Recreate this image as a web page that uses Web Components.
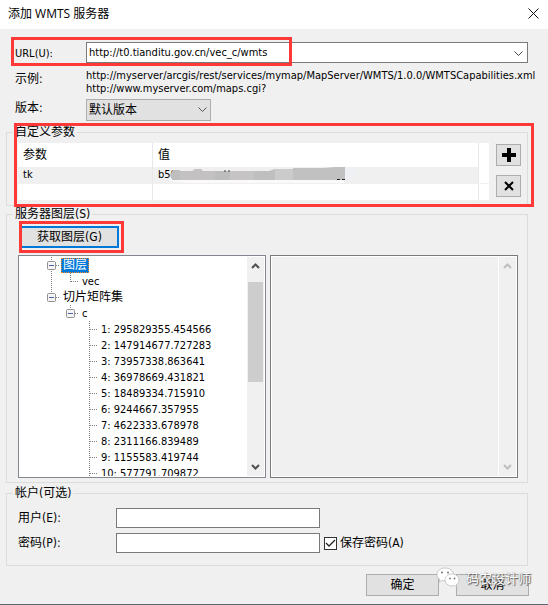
<!DOCTYPE html>
<html lang="zh-CN">
<head>
<meta charset="utf-8">
<title>添加 WMTS 服务器</title>
<style>
html {
    background: #f0f0f0;
}
body {
    margin: 0;
    color: #000;
    font: 12px/16px "DejaVu Sans Condensed", "Noto Sans CJK SC", sans-serif;
}
</style>
</head>
<body>
<wmts-dialog></wmts-dialog>

<template id="wmts-dialog">
    <style>
    :host {
        display: flex;
        flex-direction: column;
        box-sizing: border-box;
        min-height: 100vh;
        border-bottom: 1px solid #5d6572;
        background: #f0f0f0;
    }
    header {
        display: flex;
        align-items: center;
        justify-content: space-between;
        height: 29px;
        padding: 0 9px 2px 8px;
        box-sizing: border-box;
        background: #fff;
    }
    h1 {
        margin: 0;
        font: 12px/16px "Open Sans", "Noto Sans CJK SC", sans-serif;
    }
    button, input, select {
        box-sizing: border-box;
        margin: 0;
        border-radius: 0;
        color: inherit;
        font: inherit;
    }
    button {
        height: 22px;
        padding: 0;
        border: 1px solid #adadad;
        background: #e1e1e1;
    }
    .close {
        width: 12px;
        height: 12px;
        border: 0;
        background: none;
    }
    .close svg, .square svg {
        display: block;
        margin: auto;
    }
    main {
        display: flex;
        flex-direction: column;
        padding: 13px 20px 0 6px;
    }
    .connection {
        display: grid;
        grid-template-columns: 71px minmax(0, 1fr);
        row-gap: 4px;
        padding-left: 9px;
    }
    .connection > label, .connection > .caption {
        align-self: center;
        padding-bottom: 4px;
    }
    .url {
        position: relative;
        display: grid;
        grid-column: 1 / -1;
        grid-template-columns: 71px minmax(0, 1fr);
        align-items: center;
    }
    .url label {
        padding-top: 3px;
        font-size: 11px;
    }
    .combo {
        display: flex;
        align-items: center;
        height: 21px;
        border: 1px solid #7a7a7a;
        box-sizing: border-box;
        background: #fff;
    }
    .combo input {
        flex: 1;
        min-width: 0;
        padding: 0 2px;
        border: 0;
        font-size: 11px;
        outline: 0;
    }
    .combo button {
        width: 17px;
        height: 19px;
        border: 0;
        background: none;
    }
    .sample {
        margin: 2px 0 0;
        font-size: 11px;
        line-height: 13px;
        white-space: nowrap;
    }
    .caption {
        margin: 0;
    }
    .select {
        display: grid;
        width: 125px;
        align-items: center;
    }
    .select > * {
        grid-area: 1 / 1;
    }
    .select svg {
        justify-self: end;
        margin-right: 4px;
        pointer-events: none;
    }
    select {
        height: 22px;
        padding: 0 2px;
        border: 1px solid #adadad;
        background: #e1e1e1;
        appearance: none;
    }
    .custom {
        position: relative;
        margin-top: 3px;
    }
    .params {
        display: flex;
        gap: 7px;
        padding: 3px 6px 4px 11px;
    }
    param-table {
        flex: 1;
    }
    .tools {
        display: flex;
        flex-direction: column;
        gap: 9px;
        padding-top: 1px;
    }
    .square {
        width: 25px;
    }
    .layers {
        padding: 4px 9px 4px 11px;
    }
    .fetch-wrap {
        position: relative;
        display: inline-flex;
        margin-left: 2px;
    }
    .fetch {
        width: 99px;
        border: 2px solid #0078d7;
    }
    .panes {
        display: flex;
        gap: 4px;
        margin-top: 7px;
    }
    scroll-pane {
        flex: 1;
        height: 223px;
    }
    .optional {
        margin-top: 2px;
    }
    .account {
        display: grid;
        grid-template-columns: 98px 204px 1fr;
        align-items: center;
        row-gap: 5px;
        padding: 7px 11px 12px;
    }
    .account > label {
        grid-column: 1;
    }
    .account > input {
        grid-column: 2;
        width: 100%;
        height: 20px;
        padding: 0 3px;
        border: 1px solid #7a7a7a;
        background: #fff;
    }
    .remember {
        display: flex;
        align-items: center;
        gap: 3px;
        padding-left: 4px;
    }
    .tick {
        display: grid;
        place-items: center;
    }
    .tick > * {
        grid-area: 1 / 1;
    }
    .tick input {
        width: 13px;
        height: 13px;
        border: 1px solid #333;
        background: #fff;
        appearance: none;
    }
    .tick svg {
        z-index: 1;
        pointer-events: none;
    }
    .tick input:not(:checked) + svg {
        visibility: hidden;
    }
    footer {
        position: relative;
        display: flex;
        justify-content: flex-end;
        gap: 17px;
        padding: 8px 19px;
    }
    footer button {
        width: 73px;
    }
    .url mark-frame {
        inset: -5px auto -3px -4px;
        width: 281px;
    }
    .custom mark-frame {
        inset: -1px -6px -1px 8px;
    }
    .fetch-wrap mark-frame {
        inset: -5px -5px -5px -1px;
    }
    account-badge {
        position: absolute;
        top: 1px;
        right: 17px;
    }
    </style>
    <header>
        <h1>添加 WMTS 服务器</h1>
        <button class="close" aria-label="关闭">
            <svg width="11" height="11" viewBox="0 0 11 11"><path d="M.5.5l10 10M10.5.5l-10 10" stroke="#111" fill="none"/></svg>
        </button>
    </header>
    <main>
        <div class="connection">
            <div class="url">
                <label for="url">URL(U):</label>
                <div class="combo">
                    <input id="url" type="text" value="http://t0.tianditu.gov.cn/vec_c/wmts">
                    <button aria-label="展开">
                        <svg width="9" height="6" viewBox="0 0 9 6"><path d="M.5.5l4 4 4-4" stroke="#444" fill="none"/></svg>
                    </button>
                </div>
                <mark-frame></mark-frame>
            </div>
            <p class="caption">示例:</p>
            <p class="sample">http://myserver/arcgis/rest/services/mymap/MapServer/WMTS/1.0.0/WMTSCapabilities.xml<br>http://www.myserver.com/maps.cgi?</p>
            <label for="version">版本:</label>
            <div class="select">
                <select id="version"><option>默认版本</option></select>
                <svg width="9" height="6" viewBox="0 0 9 6"><path d="M.5.5l4 4 4-4" stroke="#555" fill="none"/></svg>
            </div>
        </div>

        <div class="custom">
            <group-box caption="自定义参数">
                <div class="params">
                    <param-table></param-table>
                    <div class="tools">
                        <button class="square" aria-label="添加参数">
                            <svg width="14" height="14" viewBox="0 0 14 14"><path d="M5 0h4v5h5v4H9v5H5V9H0V5h5z"/></svg>
                        </button>
                        <button class="square" aria-label="删除参数">
                            <svg width="10" height="10" viewBox="0 0 10 10"><path d="M1 1l8 8M9 1L1 9" stroke="#000" stroke-width="2" fill="none"/></svg>
                        </button>
                    </div>
                </div>
            </group-box>
            <mark-frame></mark-frame>
        </div>

        <group-box caption="服务器图层(S)">
            <div class="layers">
                <div class="fetch-wrap">
                    <button class="fetch">获取图层(G)</button>
                    <mark-frame></mark-frame>
                </div>
                <div class="panes">
                    <scroll-pane><layer-tree></layer-tree></scroll-pane>
                    <scroll-pane disabled></scroll-pane>
                </div>
            </div>
        </group-box>

        <group-box class="optional" caption="帐户(可选)">
            <div class="account">
                <label for="user">用户(E):</label>
                <input id="user" type="text">
                <label for="password">密码(P):</label>
                <input id="password" type="password">
                <div class="remember">
                    <span class="tick">
                        <input id="remember" type="checkbox" checked>
                        <svg width="11" height="9" viewBox="0 0 11 9"><path d="M1 4l3 3 6-6" stroke="#222" stroke-width="1.3" fill="none"/></svg>
                    </span>
                    <label for="remember">保存密码(A)</label>
                </div>
            </div>
        </group-box>
    </main>
    <footer>
        <button>确定</button>
        <button>取消</button>
        <account-badge></account-badge>
    </footer>
</template>

<template id="group-box">
    <style>
    :host {
        display: block;
    }
    fieldset {
        min-width: 0;
        margin: 0;
        padding: 0;
        border: 1px solid #dcdcdc;
    }
    legend {
        height: 16px;
        margin-left: 6px;
        padding: 0 2px;
    }
    </style>
    <fieldset>
        <legend></legend>
        <slot></slot>
    </fieldset>
</template>

<template id="mark-frame">
    <style>
    :host {
        position: absolute;
        z-index: 2;
        box-sizing: border-box;
        border: 3px solid #ff3838;
        pointer-events: none;
    }
    </style>
</template>

<template id="param-table">
    <style>
    :host {
        display: block;
        min-width: 0;
    }
    table {
        width: 100%;
        table-layout: fixed;
        border-collapse: separate;
        border-spacing: 0;
        background: #fff;
    }
    th, td {
        box-sizing: border-box;
        padding: 0 5px;
        border-right: 1px solid #e8e8e8;
        font-weight: normal;
        text-align: left;
        white-space: nowrap;
    }
    th:last-child, td:last-child {
        border-right: 0;
    }
    th {
        height: 24px;
    }
    td {
        height: 17px;
        border-bottom: 1px solid #f0f0f0;
        font-size: 11px;
        line-height: 16px;
    }
    tr.current td:not(:last-child) {
        background: #f0f0f0;
    }
    .name {
        width: 135px;
    }
    .rest {
        width: 9px;
    }
    .masked {
        display: flex;
        align-items: center;
    }
    svg {
        flex: none;
        margin-left: -8px;
    }
    </style>
    <table>
        <thead>
            <tr><th class="name">参数</th><th>值</th><th class="rest"></th></tr>
        </thead>
        <tbody>
            <tr class="current">
                <td>tk</td>
                <td><div class="masked">b50<svg width="190" height="16" viewBox="0 0 190 16">
                    <path d="M0 14l3-9h8l3 2h10l3-2h5l3 2h10l10 1h50l12-3h14l10-1h34v12H130l-20 1H30l-12-1z" fill="#fafafa"/>
                    <path d="M1 8l3-5h7v10H3z" fill="#bebebe"/>
                    <path d="M11 4h12l3-2h6l2 2h12v9H11z" fill="#c3c1c2"/>
                    <path d="M46 4h15v9H46z" fill="#bdbdbd"/>
                    <path d="M61 4h24v9H61z" fill="#c6c4c5"/>
                    <path d="M85 4h15l6-2h18v11H85z" fill="#bfbfbf"/>
                    <path d="M106 2h18v11h-18z" fill="#cbcbcb"/>
                    <path d="M124 1h30l12-1h10v13h-52z" fill="#c1c1c1"/>
                    <path d="M176 0h8l4 4v5l-4 4h-8z" fill="#eef0f3"/>
                    <path d="M168 12.500h3m2 0h3" stroke="#222" fill="none"/>
                    <path d="M55 4h2M59 4h2" stroke="#444"/>
                </svg></div></td>
                <td></td>
            </tr>
            <tr><td></td><td></td><td></td></tr>
        </tbody>
    </table>
</template>

<template id="scroll-pane">
    <style>
    :host {
        display: flex;
        box-sizing: border-box;
        min-width: 0;
        overflow: hidden;
        padding: 1px;
        border: 1px solid #828790;
        background: #fff;
        --arrow: #505050;
        --thumb: #cdcdcd;
    }
    :host([disabled]) {
        border-color: #7a7a7a;
        --arrow: #bfbfbf;
        --thumb: transparent;
    }
    .view {
        flex: 1;
        min-width: 0;
        overflow: hidden;
    }
    :host([disabled]) .view {
        margin-right: 1px;
        background: #f0f0f0;
    }
    .bar {
        display: flex;
        flex-direction: column;
        align-items: center;
        width: 17px;
        box-sizing: border-box;
        padding: 5px 0;
        background: #f0f0f0;
    }
    .thumb {
        flex: none;
        width: 15px;
        height: 100px;
        margin: 12px 0 auto;
        background: var(--thumb);
    }
    path {
        fill: none;
        stroke: var(--arrow);
        stroke-width: 2;
    }
    </style>
    <div class="view"><slot></slot></div>
    <div class="bar">
        <svg width="9" height="8" viewBox="0 0 9 8"><path d="M1 6l3.500-3.500L8 6"/></svg>
        <div class="thumb"></div>
        <svg width="9" height="8" viewBox="0 0 9 8"><path d="M1 2l3.500 3.500L8 2"/></svg>
    </div>
</template>

<template id="layer-tree">
    <style>
    :host {
        display: block;
        padding-left: 22px;
    }
    </style>
    <tree-node label="图层" open selected>
        <tree-node label="vec" last></tree-node>
    </tree-node>
    <tree-node label="切片矩阵集" open last>
        <tree-node class="scales" label="c" open last></tree-node>
    </tree-node>
</template>

<template id="tree-node">
    <style>
    :host {
        display: block;
        font-size: 11px;
    }
    .row {
        display: flex;
        align-items: center;
        height: 16px;
    }
    svg {
        flex: none;
    }
    .dots {
        fill: none;
        stroke: #808080;
        stroke-dasharray: 1 1;
    }
    .label {
        padding: 0 2px;
        line-height: 15px;
        white-space: nowrap;
    }
    .label.cjk {
        font-size: 12px;
    }
    :host([selected]) .label {
        outline: 1px dotted #ff8728;
        outline-offset: -1px;
        background: #0078d7;
        color: #fff;
    }
    .children {
        padding-left: 19px;
    }
    :host(:not([last])) .children {
        background: repeating-linear-gradient(#808080 0 1px, transparent 1px 2px) 9px 0 / 1px 100% no-repeat;
    }
    .box, .upper, .lower {
        display: none;
    }
    :host([open]) .box {
        display: inline;
    }
    :host([last]) .upper, :host(:not([last])) .lower {
        display: inline;
    }
    </style>
    <div class="row">
        <svg width="19" height="16" viewBox="0 0 19 16">
            <path class="dots upper" d="M9.500 0v9"/>
            <path class="dots lower" d="M9.500 0v16"/>
            <path class="dots" d="M10 8.500h7"/>
            <g class="box">
                <rect x="5.500" y="4.500" width="8" height="8" rx="1" fill="#f5f5f5" stroke="#919191"/>
                <path d="M7 8.500h5" stroke="#4b63a7"/>
            </g>
        </svg>
        <span class="label"></span>
    </div>
    <div class="children"><slot></slot></div>
</template>

<template id="account-badge">
    <style>
    :host {
        display: flex;
        align-items: flex-start;
        gap: 6px;
        color: #fff;
        font: 13px/22px "Noto Sans CJK SC", sans-serif;
        text-shadow: 1px 1px 1px #555, 0 0 1px #888;
        pointer-events: none;
    }
    </style>
    <svg width="24" height="22" viewBox="0 0 24 22">
        <g fill="#fff" stroke="#aaa" stroke-width=".6">
            <path d="M9 1C4 1 1 4 1 7.500c0 2 1 4 3 5L3 15l3.500-1.500 3 .5c4.500 0 8-3 8-6.500S14 1 9 1z"/>
            <path d="M16 7c-4.500 0-7 2.700-7 6s3 6 7 6l2.500-.5L21 20l-.5-2.500c1.600-1 2.500-2.700 2.500-4.500 0-3.300-3-6-7-6z"/>
        </g>
        <g fill="#777">
            <circle cx="6" cy="5.500" r="1"/><circle cx="12" cy="5.500" r="1"/>
            <circle cx="14" cy="11.500" r=".9"/><circle cx="18.500" cy="11.500" r=".9"/>
        </g>
    </svg>
    <span>码农设计师</span>
</template>

<script>
class TemplateElement extends HTMLElement {
    constructor() {
        super();
        const template = document.getElementById(this.localName);
        this.attachShadow({ mode: "open" }).appendChild(template.content.cloneNode(true));
    }
}

class GroupBox extends TemplateElement {
    connectedCallback() {
        this.shadowRoot.querySelector("legend").textContent = this.getAttribute("caption");
    }
}

class TreeNode extends TemplateElement {
    connectedCallback() {
        const text = this.getAttribute("label");
        const label = this.shadowRoot.querySelector(".label");
        label.textContent = text;
        label.classList.toggle("cjk", /[\u4e00-\u9fff]/.test(text));
    }
}

const scales = [
    "295829355.454566",
    "147914677.727283",
    "73957338.863641",
    "36978669.431821",
    "18489334.715910",
    "9244667.357955",
    "4622333.678978",
    "2311166.839489",
    "1155583.419744",
    "577791.709872"
];

class LayerTree extends TemplateElement {
    connectedCallback() {
        const parent = this.shadowRoot.querySelector(".scales");
        scales.forEach((scale, index) => {
            const node = document.createElement("tree-node");
            node.setAttribute("label", `${index + 1}: ${scale}`);
            parent.appendChild(node);
        });
    }
}

customElements.define("mark-frame", class extends TemplateElement {});
customElements.define("param-table", class extends TemplateElement {});
customElements.define("scroll-pane", class extends TemplateElement {});
customElements.define("account-badge", class extends TemplateElement {});
customElements.define("group-box", GroupBox);
customElements.define("tree-node", TreeNode);
customElements.define("layer-tree", LayerTree);
customElements.define("wmts-dialog", class extends TemplateElement {});
</script>
</body>
</html>
